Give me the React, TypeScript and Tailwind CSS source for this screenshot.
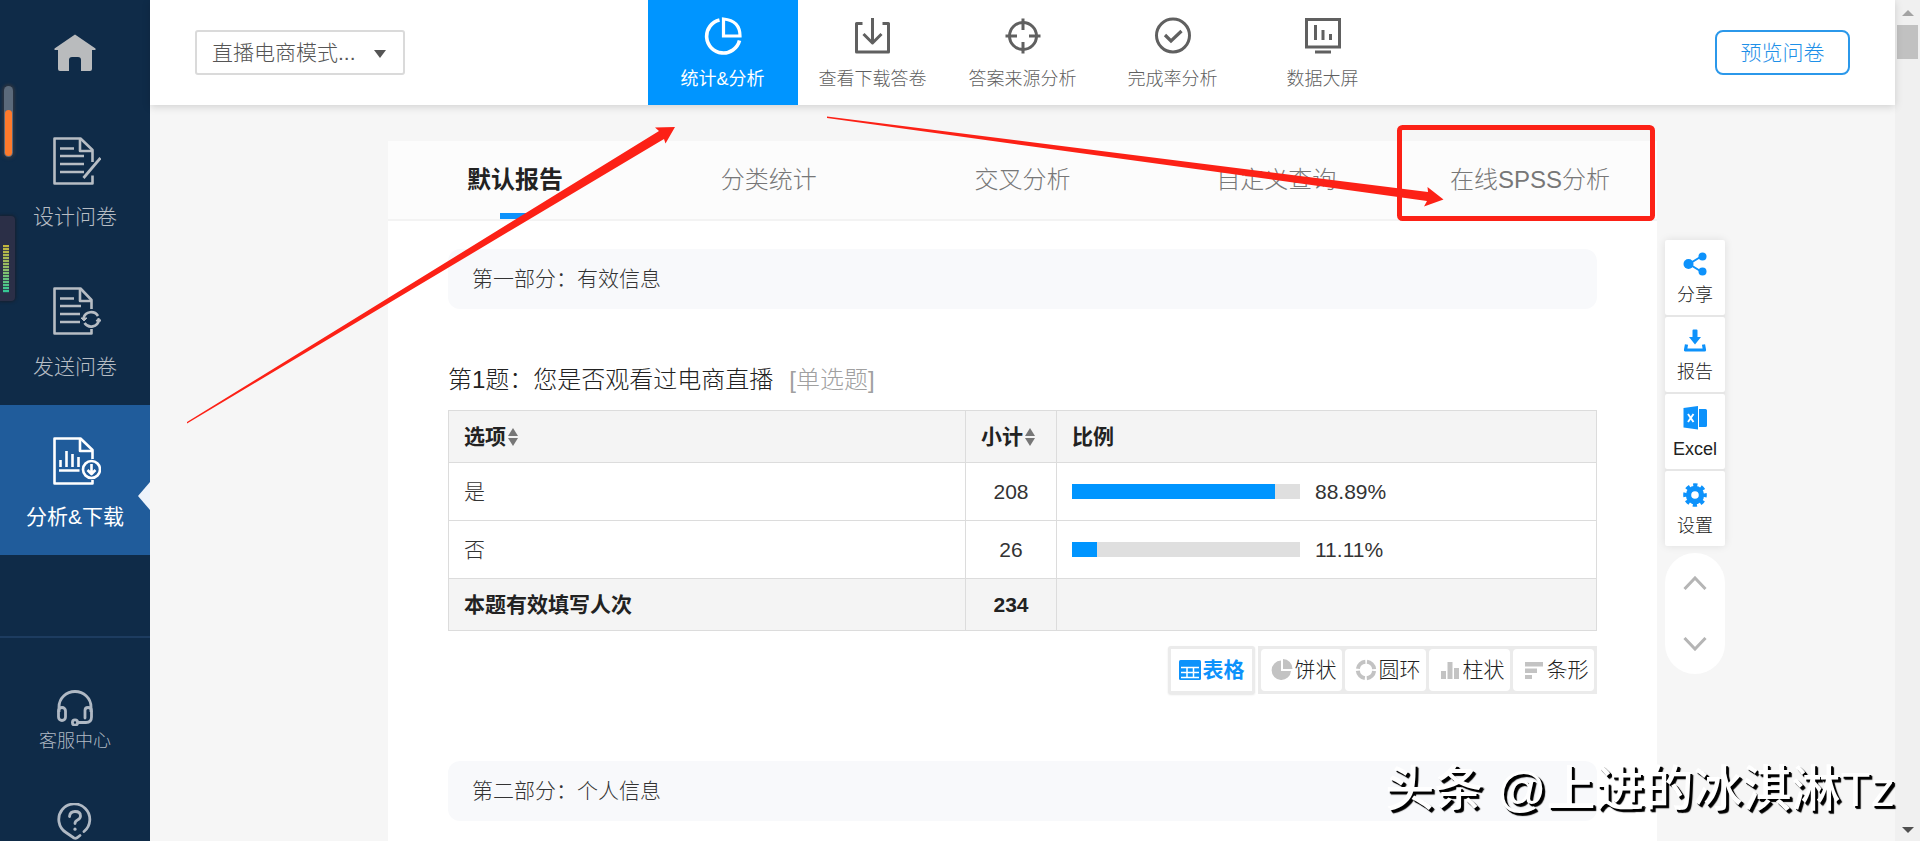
import type { ReactNode } from "react";

const stats = [
  { label: "是", count: 208, percent: 88.89 },
  { label: "否", count: 26, percent: 11.11 },
];

const reportTabs = ["默认报告", "分类统计", "交叉分析", "自定义查询", "在线SPSS分析"];

function DocShape({ children, edge }: { children: ReactNode; edge: string }) {
  return (
    <svg viewBox="0 0 48 48" className="ml-1 h-12 w-12" fill="none" stroke="currentColor" strokeWidth="2.600" strokeLinejoin="round">
      <path d={edge} />
      <path d="M27 1.5V14H39" />
      {children}
    </svg>
  );
}

function DesignIcon() {
  return (
    <DocShape edge="M39.5 25V13L27.5 1.5H1.5V46.5H39.5V38.5">
      <path d="M7 11.5H21M7 19H31M7 27H31M7 35H31" />
      <path d="M47.5 21L30.5 41" strokeWidth="2.8" />
    </DocShape>
  );
}

function SendIcon() {
  return (
    <DocShape edge="M38.5 22V13L27.5 1.5H1.5V46.5H38.5V42">
      <path d="M7 11.5H21M7 19H28M7 27H27M7 35H27" />
      <path d="M30.5 31A8 8 0 0 1 45 29M46 33A8 8 0 0 1 31.5 36" />
      <path d="M28 31H34L31 34ZM43 34H48.5L45.5 31Z" fill="currentColor" strokeWidth="1" />
    </DocShape>
  );
}

function AnalyzeIcon() {
  return (
    <DocShape edge="M39.5 22V13L27.5 1.5H1.5V46.5H39.5V43">
      <path d="M7.500 23V30M13.500 14V30M19.500 17V30M25.500 20V30M6 33.500H26.500" />
      <circle cx="38.500" cy="32.500" r="8.500" />
      <path d="M38.500 27V36M34.500 33L38.500 37L42.500 33" />
    </DocShape>
  );
}

function SideItem({ icon, label, active }: { icon: ReactNode; label: string; active?: boolean }) {
  return (
    <a
      href="#"
      className={`relative flex h-[150px] shrink-0 flex-col items-center pt-8 text-[21px] leading-8 ${
        active ? "bg-[#205c9b] text-white" : "font-light text-[#b7bdc4]"
      }`}
    >
      {icon}
      <span className="mt-4">{label}</span>
      {active && (
        <svg viewBox="0 0 12 28" className="absolute top-[77px] right-0 h-7 w-3">
          <path d="M12 0V28L0 14Z" fill="#edf3fb" />
        </svg>
      )}
    </a>
  );
}

function Sidebar() {
  return (
    <aside className="relative flex w-[150px] shrink-0 flex-col overflow-hidden bg-[#0f2b48]">
      <a href="#" aria-label="首页" className="flex h-[105px] shrink-0 justify-center pt-[34px]">
        <svg viewBox="0 0 42 37" className="h-[37px] w-[42px]" fill="#b9bbbd">
          <path d="M21 0.500L41.500 14.500V16H38V35Q38 37 36 37H27V26Q27 23 24 23H18Q15 23 15 26V37H6Q4 37 4 35V16H0.500V14.500Z" />
        </svg>
      </a>
      <nav>
        <SideItem icon={<DesignIcon />} label="设计问卷" />
        <SideItem icon={<SendIcon />} label="发送问卷" />
        <SideItem icon={<AnalyzeIcon />} label="分析&下载" active />
      </nav>
      <div className="mt-[81px] flex shrink-0 flex-col items-center border-t-2 border-[#1d3c60] pt-[52px] text-[#b0b9c4]">
        <a href="#" className="flex flex-col items-center text-lg leading-7 font-light">
          <svg viewBox="0 0 36 36" className="h-9 w-9" fill="none" stroke="currentColor" strokeWidth="2.800">
            <path d="M2 22V17A16 15.500 0 0 1 34 17V22" />
            <rect x="1.500" y="17.500" width="7" height="13" rx="3.500" />
            <path d="M28 28V20.500Q28 17.500 31 17.500Q34.500 17.500 34.500 21V27Q34.500 32.500 29 32.500H21" strokeLinecap="round" />
            <circle cx="18" cy="32.500" r="2.600" />
          </svg>
          <span className="mt-px">客服中心</span>
        </a>
        <a href="#" aria-label="帮助" className="mt-12">
          <svg viewBox="0 0 36 37" className="h-[37px] w-9" fill="none" stroke="currentColor" strokeWidth="2.800" strokeLinecap="round">
            <path d="M27 28.500A15.500 15.500 0 1 0 9 29.500L17 35Q18.500 35.700 20 34.800L23 32.500" />
            <path d="M12.500 13.500Q13 8.500 18 8.500Q23.500 8.500 23.500 13Q23.500 15.500 20.500 17Q18 18.200 18 20.500" />
            <path d="M18 26V26.200" strokeWidth="3.200" />
          </svg>
        </a>
      </div>
      {/* volume pill and level meter docked on the screen edge */}
      <div className="absolute top-[86px] left-1 flex h-[71px] w-[9px] items-end rounded-full bg-[#5b6a7b] p-px shadow-[0_0_3px_2px_#2b3440]">
        <div className="h-[46px] w-full rounded-full bg-[#ff7a2c]" />
      </div>
      <div className="absolute top-[216px] left-0 h-[85px] w-[15px] rounded-r bg-[#2b2f47] pt-[29px] shadow-[0_0_3px_1px_#16202f]">
        <svg viewBox="0 0 6 48" className="ml-[3px] h-12 w-1.5">
          <defs>
            <linearGradient id="level" x1="0" y1="0" x2="0" y2="1">
              <stop offset="0" stopColor="#c4b43c" />
              <stop offset="0.500" stopColor="#8fc068" />
              <stop offset="1" stopColor="#2fc998" />
            </linearGradient>
          </defs>
          <rect width="6" height="48" fill="url(#level)" />
          <path d="M3 2V48" stroke="#2b2f47" strokeWidth="6" strokeDasharray="1 2" opacity="0.800" />
        </svg>
      </div>
    </aside>
  );
}

const topTabs = [
  {
    label: "统计&分析",
    icon: (
      <>
        <path d="M15.500 3A16.700 16.700 0 1 0 35.500 23.500" strokeWidth="3.600" />
        <path d="M19.500 2V19H36Q36 3.500 19.500 2Z" strokeWidth="3.200" />
      </>
    ),
  },
  {
    label: "查看下载答卷",
    icon: <path d="M8.500 6.500H2.500V35H34.500V6.500H28.500M18.500 1V26M9.500 17L18.500 26L27.500 17" strokeWidth="3" strokeLinejoin="round" />,
  },
  {
    label: "答案来源分析",
    icon: (
      <>
        <circle cx="19" cy="19" r="13.500" />
        <path d="M19 1.500V13M19 25V36.500M1.500 19H13M25 19H36.500" />
      </>
    ),
  },
  {
    label: "完成率分析",
    icon: (
      <>
        <circle cx="19" cy="18.500" r="16.500" />
        <path d="M11 18L17 24L27.500 14" strokeWidth="3.200" />
      </>
    ),
  },
  {
    label: "数据大屏",
    icon: (
      <>
        <rect x="2.500" y="2.500" width="33" height="27.500" />
        <path d="M11.500 8V23M19 13V23M26.500 17V23M11 35H27" />
      </>
    ),
  },
];

function TopBar() {
  return (
    <header className="relative z-10 grid h-[105px] shrink-0 grid-cols-[1fr_auto_1fr] items-center bg-white shadow-[0_2px_8px_rgba(0,0,0,0.15)]">
      <div className="relative ml-[45px] w-[210px]">
        <select
          aria-label="问卷"
          className="h-[45px] w-full appearance-none rounded-[3px] border-2 border-[#dadada] bg-white pl-[15px] text-[21px] font-light text-[#555]"
        >
          <option>直播电商模式...</option>
        </select>
        <svg viewBox="0 0 12 8" className="pointer-events-none absolute top-5 right-[19px] h-2 w-3" fill="#555">
          <path d="M0 0H12L6 8Z" />
        </svg>
      </div>
      <nav className="flex">
        {topTabs.map((tab, i) => (
          <a
            key={tab.label}
            href="#"
            className={`flex h-[105px] w-[150px] flex-col items-center pt-[17px] text-lg leading-7 ${
              i === 0 ? "bg-[#0095ff] text-white" : "font-light text-[#606060]"
            }`}
          >
            <svg viewBox="0 0 38 38" className="h-[38px] w-[38px]" fill="none" stroke="currentColor" strokeWidth="3">
              {tab.icon}
            </svg>
            <span className="mt-2.5">{tab.label}</span>
          </a>
        ))}
      </nav>
      <button className="mr-[45px] h-[45px] w-[135px] justify-self-end rounded-lg border-2 border-[#2b98ea] bg-white text-[21px] font-light text-[#1e90e8]">
        预览问卷
      </button>
    </header>
  );
}

function SortIcon() {
  return (
    <svg viewBox="0 0 10 18" className="ml-0.5 inline-block h-[18px] w-2.5 align-[-2px]" fill="#777">
      <path d="M5 0L10 8H0ZM5 18L0 10H10Z" />
    </svg>
  );
}

function StatsTable() {
  return (
    <table className="mt-3 w-full table-fixed border-collapse text-[21px] leading-8 text-[#333] [&_td]:border [&_td]:border-[#dcdcdc] [&_td]:px-[15px] [&_th]:border [&_th]:border-[#dcdcdc] [&_th]:px-[15px]">
      <colgroup>
        <col />
        <col className="w-[91px]" />
        <col className="w-[540px]" />
      </colgroup>
      <thead>
        <tr className="h-[52px] bg-[#f4f4f4] text-left text-[#222]">
          <th>
            选项
            <SortIcon />
          </th>
          <th className="whitespace-nowrap">
            小计
            <SortIcon />
          </th>
          <th>比例</th>
        </tr>
      </thead>
      <tbody>
        {stats.map((row) => (
          <tr key={row.label} className="h-[58px]">
            <td className="font-light">{row.label}</td>
            <td className="text-center">{row.count}</td>
            <td>
              <div className="flex items-center gap-[15px]">
                <div className="h-[15px] w-[228px] bg-[#dfdfdf]">
                  <div className="h-full bg-[#0095ff]" style={{ width: `${row.percent}%` }} />
                </div>
                {row.percent}%
              </div>
            </td>
          </tr>
        ))}
      </tbody>
      <tfoot>
        <tr className="h-[52px] bg-[#f4f4f4] font-bold text-[#222]">
          <td>本题有效填写人次</td>
          <td className="text-center">234</td>
          <td />
        </tr>
      </tfoot>
    </table>
  );
}

const chartTypes = [
  {
    label: "饼状",
    icon: <path d="M10 1.500A9.700 9.700 0 1 0 20 12H10ZM12 0A10 10 0 0 1 21.500 10H12Z" fill="currentColor" />,
  },
  {
    label: "圆环",
    icon: <circle cx="11" cy="11" r="8.200" fill="none" stroke="currentColor" strokeWidth="4" strokeDasharray="10.880 2" strokeDashoffset="-1" transform="rotate(-90 11 11)" />,
  },
  { label: "柱状", icon: <path d="M2 12H7V20H2ZM8.500 3H13.500V20H8.500ZM15 9H20V20H15Z" fill="currentColor" /> },
  { label: "条形", icon: <path d="M2 3H20V7.500H2ZM2 9.500H14V14H2ZM2 16H9V20H2Z" fill="currentColor" /> },
];

function ChartSwitch() {
  return (
    <div className="mt-[15px] flex justify-end gap-[3px] text-[21px] leading-8">
      <button className="flex h-12 w-[87px] items-center justify-center gap-0.5 rounded-[3px] border-3 border-[#ebebeb] bg-white font-bold text-[#0d92fb] shadow-[0_1px_2px_rgba(0,0,0,0.1)]">
        <svg viewBox="0 0 22 20" className="h-5 w-[22px]">
          <rect width="22" height="20" rx="1.500" fill="currentColor" />
          <path d="M2 7.500H20M2 12.500H20M2 17.500H20M8 7V18M14.500 7V18" stroke="#fff" strokeWidth="1.500" />
        </svg>
        表格
      </button>
      <div className="flex gap-[3px] bg-[#ebebeb] p-[3px]">
        {chartTypes.map((type) => (
          <button key={type.label} className="flex h-[42px] w-[81px] items-center justify-center gap-0.5 rounded bg-white pl-1 font-light text-[#222]">
            <svg viewBox="0 0 22 22" className="h-[22px] w-[22px] text-[#c3c3c3]">
              {type.icon}
            </svg>
            {type.label}
          </button>
        ))}
      </div>
    </div>
  );
}

const tools = [
  {
    label: "分享",
    icon: (
      <>
        <path d="M19 4L6 12L19 20" fill="none" stroke="currentColor" strokeWidth="2" />
        <circle cx="5.500" cy="12" r="5" />
        <circle cx="19.500" cy="4.500" r="4" />
        <circle cx="19.500" cy="19.500" r="4" />
      </>
    ),
  },
  {
    label: "报告",
    icon: (
      <>
        <path d="M9.500 1.500Q9.500 0.500 10.500 0.500H13.500Q14.500 0.500 14.500 1.500V8H18L12 15.500L6 8H9.500Z" />
        <path d="M3.500 15.500L2.500 21H21.500L20.500 15.500" fill="none" stroke="currentColor" strokeWidth="3.200" strokeLinejoin="round" />
      </>
    ),
  },
  {
    label: "Excel",
    icon: (
      <>
        <path d="M0.500 2L15 0V23.500L0.500 21.500ZM16 3H22.500Q24 3 24 4.500V19.500Q24 21 22.500 21H16Z" />
        <path d="M5 8L10.500 16M10.500 8L5 16" stroke="#fff" strokeWidth="1.900" />
      </>
    ),
  },
  {
    label: "设置",
    icon: (
      <>
        <circle cx="12" cy="12" r="6.500" fill="none" stroke="currentColor" strokeWidth="5.400" />
        <circle cx="12" cy="12" r="10" fill="none" stroke="currentColor" strokeWidth="3.600" strokeDasharray="4.200 3.654" strokeDashoffset="2.100" />
      </>
    ),
  },
];

function ToolPanel() {
  return (
    <div className="absolute top-[99px] left-full ml-2 w-[60px]">
      <div className="flex flex-col gap-0.5 rounded-[3px] bg-[#e6e6e6] shadow-[0_0_8px_rgba(0,0,0,0.1)]">
        {tools.map((tool) => (
          <button key={tool.label} className="flex h-[75px] flex-col items-center rounded-[2px] bg-white pt-3 text-lg leading-7 font-light text-[#222]">
            <svg viewBox="0 0 24 24" className="h-6 w-6 text-[#0d92fb]" fill="currentColor">
              {tool.icon}
            </svg>
            <span className="mt-[5px]">{tool.label}</span>
          </button>
        ))}
      </div>
      <div className="mt-[7px] flex h-[121px] flex-col items-center justify-between rounded-full bg-white py-[23px] text-[#b5b5b5]">
        <button aria-label="向上">
          <svg viewBox="0 0 24 14" className="h-3.5 w-6" fill="none" stroke="currentColor" strokeWidth="3">
            <path d="M1.500 13L12 2L22.500 13" />
          </svg>
        </button>
        <button aria-label="向下">
          <svg viewBox="0 0 24 14" className="h-3.5 w-6" fill="none" stroke="currentColor" strokeWidth="3">
            <path d="M1.500 1L12 12L22.500 1" />
          </svg>
        </button>
      </div>
    </div>
  );
}

function SectionTitle({ children }: { children: ReactNode }) {
  return <h2 className="flex h-[60px] items-center rounded-xl bg-[#f8f9fb] px-6 text-[21px] font-light text-[#333]">{children}</h2>;
}

function Report() {
  return (
    <main className="flex flex-1 justify-center pt-9">
      <div className="relative min-h-[700px] w-full max-w-[1269px] bg-white">
        <nav className="grid h-20 grid-cols-5 border-b-2 border-[#f3f3f3] bg-[#fcfcfc] text-2xl">
          {reportTabs.map((tab, i) => (
            <a
              key={tab}
              href="#"
              className={`relative flex items-center justify-center ${i === 0 ? "font-bold text-[#222]" : "font-light text-[#777]"}`}
            >
              {tab}
              {i === 0 && <span className="absolute bottom-0 h-1.5 w-[30px] bg-[#0d92fb]" />}
            </a>
          ))}
        </nav>
        <div className="px-[60px] pt-7">
          <SectionTitle>第一部分：有效信息</SectionTitle>
          <h3 className="mt-[53px] flex gap-4 text-2xl leading-9 font-light text-[#222]">
            <span>第1题：您是否观看过电商直播</span>
            <span className="text-[#a0a0a0]">[单选题]</span>
          </h3>
          <StatsTable />
          <ChartSwitch />
          <div className="mt-[67px]">
            <SectionTitle>第二部分：个人信息</SectionTitle>
          </div>
        </div>
        <ToolPanel />
      </div>
    </main>
  );
}

function ScrollRail() {
  return (
    <div className="flex w-[25px] shrink-0 flex-col items-center bg-[#f0f0f0] pt-2.5 pb-2">
      <svg viewBox="0 0 12 6" className="h-1.5 w-3" fill="#a3a3a3">
        <path d="M0 6H12L6 0Z" />
      </svg>
      <div className="mt-[9px] h-[34px] w-[21px] bg-[#c1c1c1]" />
      <svg viewBox="0 0 12 6" className="mt-auto h-1.5 w-3" fill="#505050">
        <path d="M0 0H12L6 6Z" />
      </svg>
    </div>
  );
}

function Annotations() {
  return (
    <>
      <svg viewBox="0 0 1920 841" className="pointer-events-none absolute top-0 left-0 z-20 h-[841px] w-[1920px]" fill="#fc2116">
        <path d="M187 422L659 131L655 127.500L675 127L665.500 143.500L664 139L187 423.500Z" />
        <path d="M827 116.500L1428 192L1427.500 187L1443.500 199.500L1424 206.500L1427 201L827 118Z" />
        <rect x="1399.500" y="127.500" width="253" height="91" rx="3" fill="none" stroke="#fc2116" strokeWidth="5" />
      </svg>
      <p className="pointer-events-none absolute right-[25px] bottom-4 z-20 text-[49px] leading-[72px] font-medium whitespace-nowrap text-white [text-shadow:2px_2px_0_#000,3px_3px_1px_#000]">
        头条 @上进的冰淇淋Tz
      </p>
    </>
  );
}

export default function App() {
  return (
    <div className="relative flex h-screen overflow-hidden bg-[#f6f6f6] font-['Liberation_Sans','Noto_Sans_CJK_SC',sans-serif]">
      <Sidebar />
      <div className="flex min-w-0 flex-1 flex-col">
        <TopBar />
        <Report />
      </div>
      <ScrollRail />
      <Annotations />
    </div>
  );
}
